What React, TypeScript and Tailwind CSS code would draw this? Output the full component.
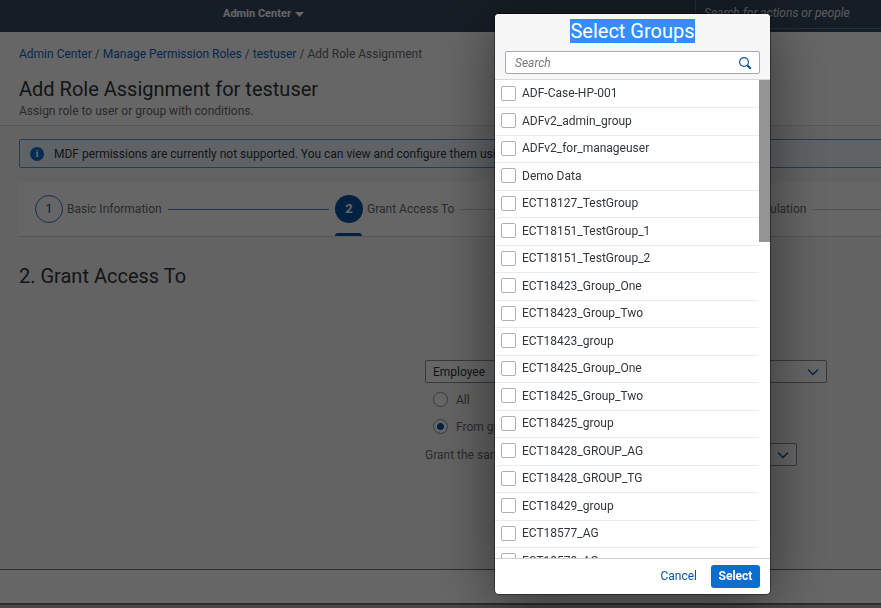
import { Fragment } from "react";

const groups = [
  "ADF-Case-HP-001",
  "ADFv2_admin_group",
  "ADFv2_for_manageuser",
  "Demo Data",
  "ECT18127_TestGroup",
  "ECT18151_TestGroup_1",
  "ECT18151_TestGroup_2",
  "ECT18423_Group_One",
  "ECT18423_Group_Two",
  "ECT18423_group",
  "ECT18425_Group_One",
  "ECT18425_Group_Two",
  "ECT18425_group",
  "ECT18428_GROUP_AG",
  "ECT18428_GROUP_TG",
  "ECT18429_group",
  "ECT18577_AG",
  "ECT18578_AG",
];

const crumbs = ["Admin Center", "Manage Permission Roles", "testuser"];

function SelectArrow() {
  return (
    <svg
      viewBox="0 0 12 8"
      className="pointer-events-none absolute right-2 h-2 w-3 text-[#0854a0]"
      fill="none"
      stroke="currentColor"
      strokeWidth="1.4"
      aria-hidden="true"
    >
      <path d="M1 1.5l5 5 5-5" />
    </svg>
  );
}

function SearchIcon() {
  return (
    <svg
      viewBox="0 0 14 14"
      className="pointer-events-none absolute right-2 size-[14px] text-[#0854a0]"
      fill="none"
      stroke="currentColor"
      aria-hidden="true"
    >
      <circle cx="6" cy="6" r="4.4" strokeWidth="1.2" />
      <path d="M9.2 9.2l3.6 3.6" strokeWidth="2.2" />
    </svg>
  );
}

function TopBar() {
  return (
    <header className="flex h-8 bg-[#354a5f] text-white">
      <div className="flex w-[695px] shrink-0 items-start pt-1 pl-[223px]">
        <button type="button" className="flex items-center gap-1 text-[11px] leading-5 font-bold">
          Admin Center
          <svg viewBox="0 0 9 5" className="h-[5px] w-[9px]" fill="currentColor" aria-hidden="true">
            <path d="M0 0h9L4.5 5z" />
          </svg>
        </button>
      </div>
      <input
        type="text"
        aria-label="Search for actions or people"
        placeholder="Search for actions or people"
        className="h-[29px] flex-1 border-b border-l border-[#5d7a96] bg-transparent px-2 pb-0.5 text-xs italic placeholder:text-white/85"
      />
    </header>
  );
}

function PageHeader() {
  return (
    <section className="h-[94px] border-b border-[#d9d9d9] bg-white px-[19px] pt-[13px]">
      <nav aria-label="Breadcrumb" className="flex items-center gap-[3px] text-xs leading-[18px] text-[#6a6d70]">
        {crumbs.map((crumb) => (
          <Fragment key={crumb}>
            <a href="#" className="text-[#1463c4]">
              {crumb}
            </a>
            <span>/</span>
          </Fragment>
        ))}
        <span>Add Role Assignment</span>
      </nav>
      <h1 className="mt-3.5 text-xl leading-6 text-[#32363a]">Add Role Assignment for testuser</h1>
      <p className="text-xs leading-5 text-[#6a6d70]">Assign role to user or group with conditions.</p>
    </section>
  );
}

function Steps() {
  return (
    <ol className="mt-[14px] flex h-[55px] items-center border-b border-[#d9d9d9] bg-white pl-4 text-xs text-[#6a6d70]">
      <li className="flex w-[300px] items-center">
        <span className="flex size-7 items-center justify-center rounded-full border border-[#3b76bd] text-[13px] text-[#0854a0]">
          1
        </span>
        <span className="ml-1">Basic Information</span>
        <span className="mx-1.5 h-px flex-1 bg-[#4a86c4]" />
      </li>
      <li className="relative flex h-full w-[345px] items-center">
        <span className="flex size-7 items-center justify-center rounded-full bg-[#0854a0] text-[13px] font-bold text-white">
          2
        </span>
        <span className="ml-1">Grant Access To</span>
        <span className="mx-1.5 h-px flex-1 bg-[#d0d0d0]" />
        <span className="absolute bottom-0 left-0 h-[3px] w-[27px] rounded-t-sm bg-[#0854a0]" />
      </li>
      <li className="flex flex-1 items-center">
        <span className="flex size-7 items-center justify-center rounded-full border border-[#89919a] text-[13px]">
          3
        </span>
        <span className="ml-1">Target Population</span>
        <span className="mx-1.5 h-px flex-1 bg-[#d0d0d0]" />
      </li>
    </ol>
  );
}

function AccessForm() {
  return (
    <form className="mx-auto mt-[72px] w-[402px] text-xs text-[#6a6d70]">
      <div className="relative flex items-center">
        <select
          aria-label="Grant access to"
          className="h-[23px] w-full appearance-none rounded-xs border border-[#89919a] bg-white px-[7px] text-[#32363a]"
        >
          <option>Employee</option>
        </select>
        <SelectArrow />
      </div>
      <label className="mt-[3px] ml-2 flex h-[27px] items-center gap-2">
        <input
          type="radio"
          name="scope"
          className="size-[15px] appearance-none rounded-full border border-[#89919a] bg-white"
        />
        All
      </label>
      <label className="ml-2 flex h-[27px] items-center gap-2">
        <input
          type="radio"
          name="scope"
          defaultChecked
          className="size-[15px] appearance-none rounded-full border border-[#89919a] bg-white checked:bg-[radial-gradient(circle,#0854a0_3px,#fff_4px)]"
        />
        From groups
      </label>
      <div className="mt-[3px] flex items-center">
        <label htmlFor="same-access">Grant the same access to</label>
        <div className="relative ml-5 flex w-[216px] items-center">
          <select
            id="same-access"
            className="h-[23px] w-full appearance-none rounded-xs border border-[#89919a] bg-white px-[7px]"
          />
          <SelectArrow />
        </div>
      </div>
    </form>
  );
}

function SelectGroupsDialog() {
  return (
    <div className="fixed inset-0 flex justify-end bg-black/60 py-3.5 pr-[111px]">
      <div
        role="dialog"
        aria-labelledby="dialog-title"
        className="flex w-[275px] flex-col overflow-hidden rounded-sm bg-white shadow-[0_0_0_1px_rgba(0,0,0,0.4),0_10px_60px_rgba(0,0,0,0.5)]"
      >
        <div className="flex h-[66px] shrink-0 flex-col items-center border-b border-[#d9d9d9] bg-[#f7f7f7] px-[10px] pt-[5px]">
          <h2 id="dialog-title" className="bg-[#338fff] text-xl leading-6 text-white">
            Select Groups
          </h2>
          <div className="relative mt-2 flex w-full items-center">
            <input
              type="search"
              aria-label="Search"
              placeholder="Search"
              className="h-[23px] w-full rounded-xs border border-[#a5abb2] bg-white px-[9px] text-xs text-[#32363a] italic placeholder:text-[#74777a]"
            />
            <SearchIcon />
          </div>
        </div>
        <div className="flex min-h-0 flex-1 overflow-hidden">
          <ul className="flex-1 pt-px">
            {groups.map((group) => (
              <li key={group} className="border-b border-[#ebebeb] odd:h-[27px] even:h-7">
                <label className="flex h-full items-center gap-1.5 pb-0.5 pl-1.5 text-xs text-[#32363a]">
                  <input
                    type="checkbox"
                    className="size-[15px] appearance-none rounded-xs border border-[#a9b0b7] bg-white"
                  />
                  {group}
                </label>
              </li>
            ))}
          </ul>
          <div className="w-[11px]">
            <div className="h-[162px] bg-[#949494]" />
          </div>
        </div>
        <div className="flex h-9 shrink-0 items-center justify-end border-t border-[#d0d0d0] pr-[10px] pb-px text-xs">
          <button type="button" className="px-3.5 text-[#0854a0]">
            Cancel
          </button>
          <button type="button" className="h-[23px] w-[49px] rounded-[3px] bg-[#0a6ed1] font-bold text-white">
            Select
          </button>
        </div>
      </div>
    </div>
  );
}

export default function App() {
  return (
    <div className="h-screen overflow-hidden bg-[#f7f7f7] font-['Roboto',sans-serif]">
      <div className="flex h-full min-w-[1252px] flex-col">
        <TopBar />
        <PageHeader />
        <main className="flex-1 px-[19px] pt-[13px]">
          <div className="flex h-[29px] items-center gap-2.5 rounded-xs border border-[#4a9be8] bg-[#f0f8ff] px-2.5 text-xs text-[#32363a]">
            <span className="flex size-[14px] items-center justify-center rounded-full bg-[#0a6ed1] font-['Liberation_Serif',serif] text-[11px] font-bold text-white">
              i
            </span>
            MDF permissions are currently not supported. You can view and configure them using the old page.
          </div>
          <Steps />
          <h2 className="mt-[27px] text-xl leading-6 text-[#32363a]">2. Grant Access To</h2>
          <AccessForm />
        </main>
        <footer className="h-[39px] border-t border-[#707070] bg-[#b5b5b5]">
          <div className="h-[35px] border-b-2 border-[#707070] bg-white" />
        </footer>
      </div>
      <SelectGroupsDialog />
    </div>
  );
}
